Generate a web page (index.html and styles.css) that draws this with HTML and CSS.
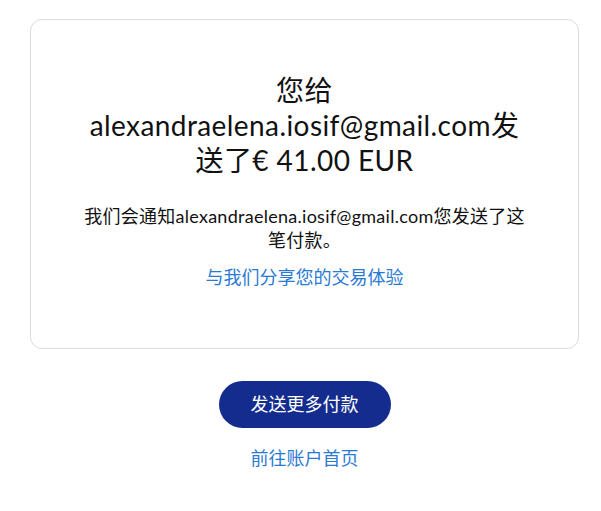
FILE: index.html
```html
<!DOCTYPE html>
<html lang="zh-CN">
<head>
    <meta charset="UTF-8">
    <meta name="viewport" content="width=device-width, initial-scale=1.0">
    <title>付款已发送</title>
    <link rel="stylesheet" href="styles.css">
</head>
<body>
    <main class="page">
        <section class="card">
            <h1 class="title">您给alexandraelena.iosif@gmail.com发送了€ 41.00 EUR</h1>
            <p class="note">我们会通知alexandraelena.iosif@gmail.com您发送了这笔付款。</p>
            <a class="link" href="#">与我们分享您的交易体验</a>
        </section>
        <div class="actions">
            <a class="btn" href="#">发送更多付款</a>
            <a class="link" href="#">前往账户首页</a>
        </div>
    </main>
</body>
</html>
```

FILE: styles.css
```css
body {
    margin: 0;
    padding: 0;
    background: #fff;
    color: #111;
    font-family: Lato, "Noto Sans CJK SC", sans-serif;
}
.page {
    margin: 19px 22px 0 30px;
}
.card {
    border: 1px solid #dcdcdc;
    border-radius: 12px;
    padding: 53px 50px 59px;
    text-align: center;
}
.title {
    margin: 0;
    font-size: 28px;
    font-weight: 400;
    line-height: 35px;
    letter-spacing: 0.015em;
}
.note {
    margin: 26px 0 13px;
    font-size: 18px;
    line-height: 24px;
    letter-spacing: 0.015em;
}
.link {
    display: inline-block;
    font-size: 18px;
    line-height: 24px;
    color: #2a7ad4;
    text-decoration: none;
}
.actions {
    display: flex;
    flex-direction: column;
    align-items: center;
    gap: 18px;
    margin-top: 32px;
}
.btn {
    display: inline-block;
    padding: 0 32px;
    height: 47px;
    line-height: 47px;
    border-radius: 24px;
    background: #142c8e;
    color: #fff;
    font-size: 18px;
    text-decoration: none;
}
```
